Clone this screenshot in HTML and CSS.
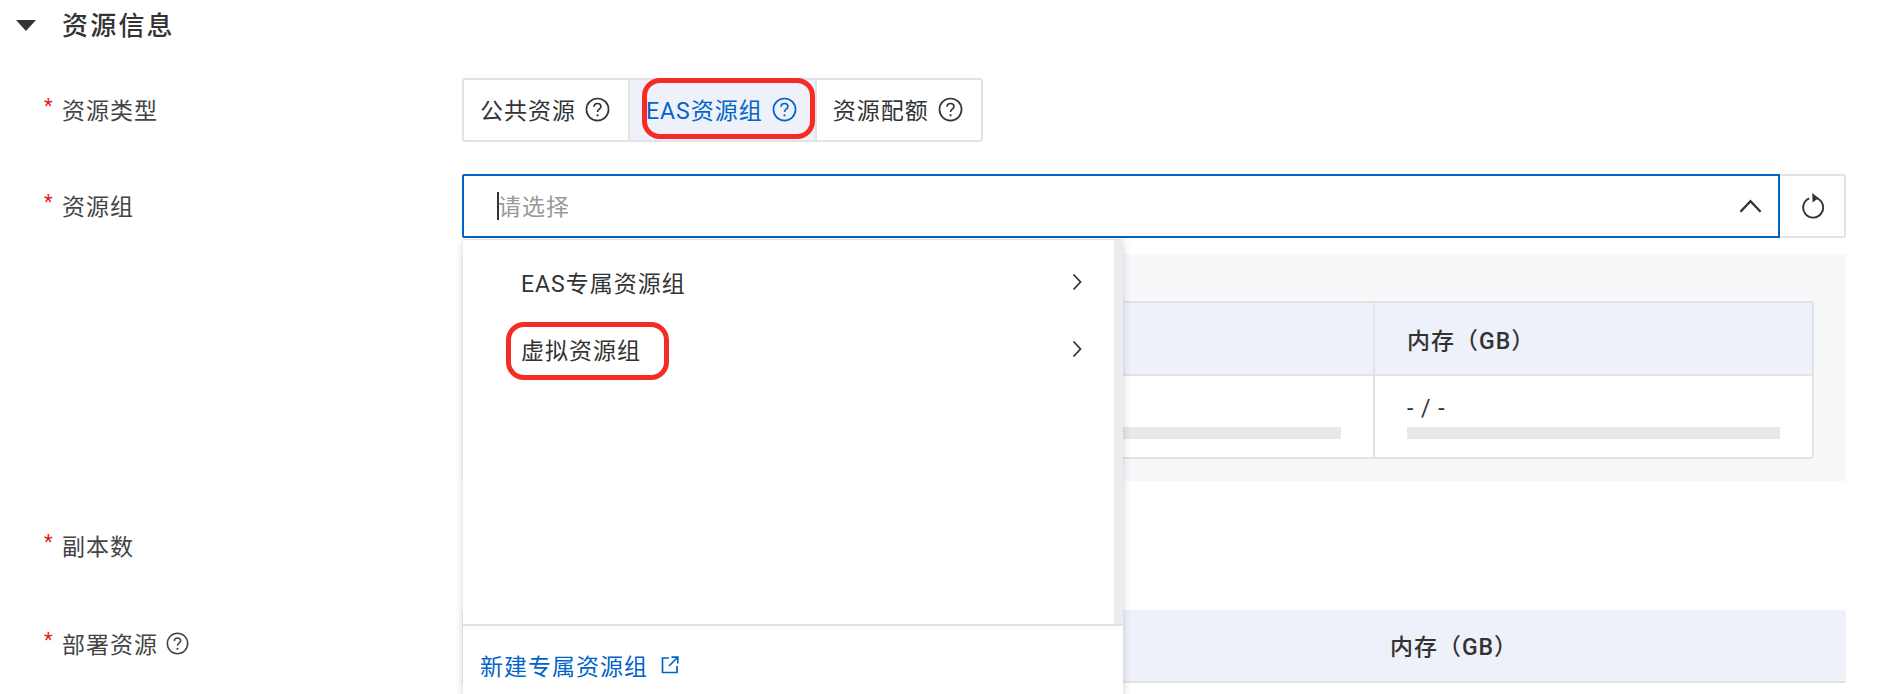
FILE: index.html
```html
<!DOCTYPE html>
<html lang="zh-CN">
<head>
    <meta charset="UTF-8">
    <meta name="viewport" content="width=device-width, initial-scale=1.0">
    <title>资源信息</title>
    <link rel="stylesheet" href="styles.css">
</head>
<body>
    <svg class="icon-defs" width="0" height="0">
        <symbol id="help" viewBox="0 0 24 24">
            <circle cx="12" cy="12" r="10.6" fill="none" stroke="currentColor" stroke-width="1.6"/>
            <path d="M8.7 9.4c0-1.9 1.4-3.2 3.3-3.2s3.3 1.2 3.3 2.9c0 2.5-3.3 2.6-3.3 5.2" fill="none" stroke="currentColor" stroke-width="1.6"/>
            <circle cx="12" cy="17.6" r="1.1" fill="currentColor"/>
        </symbol>
    </svg>

    <div class="section-title">
        <span class="caret-down"></span>
        <h2>资源信息</h2>
    </div>

    <div class="form-row first">
        <label class="form-label"><i>*</i>资源类型</label>
        <div class="segments">
            <div class="segment">公共资源 <svg class="help"><use href="#help"/></svg></div>
            <div class="segment active">
                EAS资源组 <svg class="help"><use href="#help"/></svg>
                <span class="mark mark-segment"></span>
            </div>
            <div class="segment">资源配额 <svg class="help"><use href="#help"/></svg></div>
        </div>
    </div>

    <div class="form-row">
        <label class="form-label"><i>*</i>资源组</label>
        <div class="form-control">
            <div class="select-group">
                <div class="select">
                    <span class="select-caret"></span>
                    <span class="placeholder">请选择</span>
                    <svg class="chevron-up" viewBox="0 0 24 14"><path d="M1.5 13 12 2l10.5 11" fill="none" stroke="#333" stroke-width="2.4"/></svg>

                    <div class="dropdown">
                        <div class="menu">
                            <div class="menu-item">EAS专属资源组
                                <svg class="chevron-right" viewBox="0 0 10 18"><path d="M1.5 1.5 8.5 9l-7 7.5" fill="none" stroke="#333" stroke-width="1.8"/></svg>
                            </div>
                            <div class="menu-item">
                                <span class="menu-text">虚拟资源组<span class="mark mark-item"></span></span>
                                <svg class="chevron-right" viewBox="0 0 10 18"><path d="M1.5 1.5 8.5 9l-7 7.5" fill="none" stroke="#333" stroke-width="1.8"/></svg>
                            </div>
                            <div class="scroll-strip"></div>
                        </div>
                        <div class="dropdown-footer">
                            <a class="link">新建专属资源组</a>
                            <svg class="external" viewBox="0 0 18 18">
                                <path d="M8 2H1.5v14.5H16V10M10.5 1.2h6.3v6.3M16.5 1.5 8 10" fill="none" stroke="#0064c8" stroke-width="1.7"/>
                            </svg>
                        </div>
                    </div>
                </div>
                <div class="refresh">
                    <svg viewBox="0 0 24 28" width="24" height="28">
                        <path d="M15.6 6.2a10 10 0 1 1-7.4.2" fill="none" stroke="#333" stroke-width="1.9"/>
                        <path d="M11.2 1 17.6 6l-6 4.4z" fill="#333"/>
                    </svg>
                </div>
            </div>

            <div class="quota-panel">
                <div class="quota-table">
                    <div class="cell head"></div>
                    <div class="cell head">内存（GB）</div>
                    <div class="cell body-cell">
                        <span>- / -</span>
                        <div class="bar"></div>
                    </div>
                    <div class="cell body-cell">
                        <span>- / -</span>
                        <div class="bar"></div>
                    </div>
                </div>
            </div>
        </div>
    </div>

    <div class="form-row replicas">
        <label class="form-label"><i>*</i>副本数</label>
        <div class="form-control"></div>
    </div>

    <div class="form-row deploy">
        <label class="form-label"><i>*</i>部署资源 <svg class="help small"><use href="#help"/></svg></label>
        <div class="deploy-table">
            <div class="deploy-head"></div>
            <div class="deploy-head">内存（GB）</div>
        </div>
    </div>
</body>
</html>
```

FILE: styles.css
```css
* {
    margin: 0;
    padding: 0;
    box-sizing: border-box;
}
html, body {
    height: 694px;
    overflow: hidden;
}
body {
    background: white;
    color: #333;
    font-family: Roboto, "Noto Sans CJK SC", sans-serif;
    font-size: 23px;
    letter-spacing: 1px;
}
.icon-defs {
    position: absolute;
}
.section-title {
    display: flex;
    align-items: center;
    height: 50px;
    padding-left: 16px;
}
.section-title h2 {
    margin-left: 26px;
    padding-bottom: 4px;
    font-size: 26px;
    font-weight: 500;
    letter-spacing: 2.2px;
}
.caret-down {
    width: 0;
    height: 0;
    border-left: 10px solid transparent;
    border-right: 10px solid transparent;
    border-top: 11px solid #333;
}
.form-row {
    display: grid;
    grid-template-columns: 462px 1fr;
    padding-right: 50px;
    margin-top: 32px;
}
.form-row.first {
    margin-top: 28px;
}
.form-label {
    display: flex;
    align-items: center;
    height: 64px;
    padding-left: 44px;
    padding-bottom: 3px;
    color: #444;
    white-space: pre;
}
.form-label i {
    width: 18px;
    margin-top: -6px;
    color: #e0201b;
    font-style: normal;
    font-size: 20px;
}
.segments {
    display: flex;
    justify-self: start;
    height: 64px;
    border: 2px solid #e3e3e3;
    border-radius: 3px;
}
.segment {
    position: relative;
    display: flex;
    align-items: center;
    gap: 9px;
    padding: 0 18px 3px 16px;
    white-space: nowrap;
    border-right: 2px solid #e3e3e3;
}
.segment:last-child {
    border-right: none;
}
.segment.active {
    background: #eef1f9;
    color: #0064c8;
}
.help {
    flex: none;
    width: 25px;
    height: 25px;
    margin-top: 2px;
}
.help.small {
    width: 23px;
    height: 23px;
    margin-left: 1px;
}
.mark {
    position: absolute;
    border: 5px solid #f42c25;
}
.mark-segment {
    top: -2px;
    left: 12px;
    right: 0;
    bottom: 1px;
    border-radius: 18px;
}
.mark-item {
    top: -10px;
    left: -15px;
    right: -28px;
    bottom: -14px;
    border-radius: 18px;
}
.select-group {
    display: flex;
}
.select {
    position: relative;
    flex: 1;
    display: flex;
    align-items: center;
    height: 64px;
    padding-left: 33px;
    border: 2px solid #0064c8;
    border-radius: 2px 0 0 2px;
}
.select-caret {
    width: 2px;
    height: 28px;
    margin-right: -1px;
    background: #333;
}
.placeholder {
    flex: 1;
    padding-bottom: 3px;
    color: #999;
}
.chevron-up {
    width: 23px;
    height: 14px;
    margin-right: 16px;
}
.refresh {
    display: flex;
    align-items: center;
    justify-content: center;
    width: 66px;
    height: 64px;
    padding-left: 1px;
    border: 2px solid #e3e3e3;
    border-left: none;
    border-radius: 0 3px 3px 0;
}
.dropdown {
    position: absolute;
    z-index: 2;
    top: 63px;
    left: -1px;
    display: flex;
    flex-direction: column;
    width: 660px;
    height: 480px;
    background: white;
    border-top: 1px solid #e3e3e3;
    border-radius: 3px 3px 0 0;
    box-shadow: 0 2px 8px rgba(0,0,0,0.18);
}
.menu {
    position: relative;
    height: 384px;
    padding-top: 8px;
}
.menu-item {
    display: flex;
    align-items: center;
    justify-content: space-between;
    height: 67px;
    padding: 0 41px 0 58px;
}
.menu-text {
    position: relative;
}
.chevron-right {
    width: 10px;
    height: 18px;
}
.scroll-strip {
    position: absolute;
    top: 0;
    right: 0;
    bottom: 0;
    width: 9px;
    background: #ebecef;
    border-radius: 3px;
}
.dropdown-footer {
    display: flex;
    align-items: center;
    gap: 13px;
    height: 80px;
    padding-left: 17px;
    border-top: 2px solid #e3e3e3;
}
.link {
    color: #0064c8;
}
.external {
    width: 18px;
    height: 18px;
}
.quota-panel {
    margin-top: 16px;
    height: 227px;
    padding: 47px 32px 25px;
    background: #f7f8fa;
}
.quota-table {
    display: grid;
    grid-template-columns: 1fr 439px;
    grid-template-rows: 73px 81px;
    background: white;
    border: 2px solid #e3e3e3;
    border-radius: 3px;
}
.cell {
    padding: 0 32px;
    border-left: 2px solid #e3e3e3;
}
.cell:nth-child(odd) {
    border-left: none;
}
.cell.head {
    display: flex;
    align-items: center;
    background: #eef1f9;
    border-bottom: 2px solid #e3e3e3;
    font-weight: 500;
}
.body-cell {
    padding-top: 16px;
    line-height: 34px;
}
.bar {
    height: 12px;
    margin-top: 1px;
    background: #e8e8e8;
}
.replicas {
    height: 64px;
    margin-top: 33px;
}
.deploy {
    margin-top: 32px;
}
.form-row.deploy .form-label {
    height: 68px;
}
.deploy-table {
    display: grid;
    grid-template-columns: 1fr 784px;
    height: 73px;
    padding-bottom: 2px;
    background: #eef1f9;
    border-bottom: 2px solid #e3e3e3;
    border-radius: 3px 3px 0 0;
}
.deploy-head {
    display: flex;
    align-items: center;
    justify-content: center;
    font-weight: 500;
}
```
